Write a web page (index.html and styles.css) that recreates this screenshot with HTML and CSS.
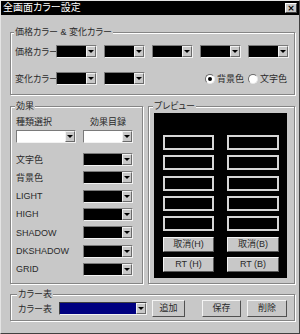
FILE: index.html
```html
<!DOCTYPE html>
<html lang="ja">
<head>
  <meta charset="UTF-8" />
  <title>全画面カラー設定</title>
  <link rel="stylesheet" href="styles.css">
</head>
<body>
  <div class="window">
    <div class="titlebar">
      <span class="title">全画面カラー設定</span>
      <span class="close">×</span>
    </div>

    <div class="content">
      <fieldset class="group g-colors">
        <legend>価格カラー &amp; 変化カラー</legend>
        <div class="row">
          <span class="lbl">価格カラー</span>
          <div class="combos">
            <div class="combo"><span class="swatch"></span><span class="arrow"></span></div>
            <div class="combo"><span class="swatch"></span><span class="arrow"></span></div>
            <div class="combo"><span class="swatch"></span><span class="arrow"></span></div>
            <div class="combo"><span class="swatch"></span><span class="arrow"></span></div>
            <div class="combo"><span class="swatch"></span><span class="arrow"></span></div>
          </div>
        </div>
        <div class="row row-2">
          <span class="lbl">変化カラー</span>
          <div class="combos">
            <div class="combo"><span class="swatch"></span><span class="arrow"></span></div>
            <div class="combo"><span class="swatch"></span><span class="arrow"></span></div>
          </div>
          <div class="radios">
            <span class="radio checked"></span><span class="radio-text">背景色</span>
            <span class="radio"></span><span class="radio-text">文字色</span>
          </div>
        </div>
      </fieldset>

      <div class="middle">
        <fieldset class="group g-effect">
          <legend>効果</legend>
          <div class="effect-head">
            <span>種類選択</span>
            <span class="center">効果目録</span>
            <div class="combo white wide"><span class="swatch"></span><span class="arrow"></span></div>
            <div class="combo white"><span class="swatch"></span><span class="arrow"></span></div>
          </div>
          <div class="effect-list">
            <span>文字色</span>
            <div class="combo"><span class="swatch"></span><span class="arrow"></span></div>
            <span>背景色</span>
            <div class="combo"><span class="swatch"></span><span class="arrow"></span></div>
            <span>LIGHT</span>
            <div class="combo"><span class="swatch"></span><span class="arrow"></span></div>
            <span>HIGH</span>
            <div class="combo"><span class="swatch"></span><span class="arrow"></span></div>
            <span>SHADOW</span>
            <div class="combo"><span class="swatch"></span><span class="arrow"></span></div>
            <span>DKSHADOW</span>
            <div class="combo"><span class="swatch"></span><span class="arrow"></span></div>
            <span>GRID</span>
            <div class="combo"><span class="swatch"></span><span class="arrow"></span></div>
          </div>
        </fieldset>

        <fieldset class="group g-preview">
          <legend>プレビュー</legend>
          <div class="preview">
            <span class="cell"></span><span class="cell"></span>
            <span class="cell"></span><span class="cell"></span>
            <span class="cell"></span><span class="cell"></span>
            <span class="cell"></span><span class="cell"></span>
            <span class="cell"></span><span class="cell"></span>
            <span class="pbtn">取消(H)</span><span class="pbtn">取消(B)</span>
            <span class="pbtn">RT (H)</span><span class="pbtn">RT (B)</span>
          </div>
        </fieldset>
      </div>

      <fieldset class="group g-table">
        <legend>カラー表</legend>
        <div class="row">
          <span class="lbl">カラー表</span>
          <div class="combo navy"><span class="swatch"></span><span class="arrow"></span></div>
          <span class="btn btn-add">追加</span>
          <span class="btn btn-save">保存</span>
          <span class="btn btn-del">削除</span>
        </div>
      </fieldset>
    </div>
  </div>
</body>
</html>
```

FILE: styles.css
```css
body {
  margin: 0;
  background: #c8c8c8;
  font-family: "Liberation Sans", "Noto Sans CJK JP", sans-serif;
  font-size: 9px;
  font-feature-settings: "palt";
  color: #2a2a2a;
  white-space: nowrap;
}

.window {
  width: 300px;
  height: 334px;
  box-sizing: border-box;
  background: #c8c8c8;
  border: 1px solid;
  border-color: #e4e4e4 #404040 #404040 #e4e4e4;
  overflow: hidden;
}

.titlebar {
  height: 14px;
  background: #000;
  color: #fff;
  display: flex;
  align-items: center;
  justify-content: space-between;
  padding-left: 2px;
}

.title {
  font-size: 10px;
  line-height: 14px;
}

.close {
  width: 12px;
  height: 10px;
  margin-right: 2px;
  box-sizing: border-box;
  background: #c8c8c8;
  color: #000;
  border: 1px solid;
  border-color: #fff #404040 #404040 #fff;
  font-family: "DejaVu Sans", sans-serif;
  font-size: 9px;
  font-weight: bold;
  line-height: 8px;
  text-align: center;
}

.content {
  padding: 11px 4px 0 9px;
}

.group {
  margin: 0;
  min-width: 0;
  border: 1px solid #858585;
  box-shadow: inset 1px 1px 0 #fff, 1px 1px 0 #fff;
}

.group legend {
  padding: 0 1px;
  margin-left: -1px;
  line-height: 12px;
  background: #c8c8c8;
}

.row {
  display: flex;
  align-items: center;
  height: 13px;
}

.lbl {
  width: 41px;
  flex-shrink: 0;
  line-height: 12px;
}

/* colour combo boxes */
.combos {
  display: flex;
  gap: 7px;
}

.combo {
  display: flex;
  width: 41px;
  height: 13px;
  box-sizing: border-box;
  border: 1px solid;
  border-color: #7a7a7a #f2f2f2 #f2f2f2 #7a7a7a;
  background: #000;
  flex-shrink: 0;
}

.combo .swatch {
  flex: 1;
}

.combo .arrow {
  width: 10px;
  box-sizing: border-box;
  background: #c8c8c8;
  border: 1px solid;
  border-color: #f2f2f2 #6a6a6a #6a6a6a #f2f2f2;
  display: flex;
  align-items: center;
  justify-content: center;
}

.combo .arrow::after {
  content: "";
  border-top: 3px solid #000;
  border-left: 3px solid transparent;
  border-right: 3px solid transparent;
}

.combo.white {
  background: #fff;
  width: 50px;
}

.combo.white.wide {
  width: 60px;
}

.combo.navy {
  width: 88px;
  background: #000080;
  border-color: #404040 #f2f2f2 #f2f2f2 #404040;
}

/* price / change colours */
.g-colors {
  padding: 7px 4px 9px 4px;
}

.row-2 {
  margin-top: 14px;
}

.radios {
  display: flex;
  align-items: center;
  margin-left: 60px;
}

.radio {
  width: 10px;
  height: 10px;
  box-sizing: border-box;
  border-radius: 50%;
  background: #fff;
  border: 1px solid;
  border-color: #6a6a6a #e8e8e8 #e8e8e8 #6a6a6a;
  display: flex;
  align-items: center;
  justify-content: center;
}

.radio.checked::after {
  content: "";
  width: 4px;
  height: 4px;
  border-radius: 50%;
  background: #000;
}

.radio-text {
  margin: 0 4px 0 2px;
}

/* effect + preview */
.middle {
  display: flex;
  gap: 5px;
  margin-top: 5px;
}

.g-effect {
  width: 133px;
  box-sizing: border-box;
  padding: 4px 4px 5px 5px;
}

.effect-head {
  display: grid;
  grid-template-columns: 67px 50px;
  row-gap: 2px;
  line-height: 12px;
}

.center {
  text-align: center;
}

.effect-list {
  display: grid;
  grid-template-columns: 67px 50px;
  grid-auto-rows: 13px;
  row-gap: 5.33px;
  align-items: center;
  margin-top: 10px;
  line-height: 12px;
}

.effect-list .combo {
  width: 50px;
}

.g-preview {
  flex: 1;
  padding: 1px 7px 5px 5px;
}

.preview {
  background: #000;
  height: 165px;
  box-sizing: border-box;
  padding: 22px 8px 6px 9px;
  display: grid;
  grid-template-columns: 51px 52px;
  grid-auto-rows: 15px;
  column-gap: 13px;
  row-gap: 5.33px;
}

.cell {
  border: 2px solid #d6d6d6;
}

.pbtn {
  background: #c8c8c8;
  border: 1px solid;
  border-color: #f4f4f4 #5a5a5a #5a5a5a #f4f4f4;
  text-align: center;
  line-height: 13px;
}

/* colour table */
.g-table {
  margin-top: 4px;
  padding: 0 4px 3px 7px;
}

.g-table .row {
  height: 17px;
}

.btn {
  height: 17px;
  box-sizing: border-box;
  background: #c8c8c8;
  border: 1px solid;
  border-color: #f4f4f4 #505050 #505050 #f4f4f4;
  text-align: center;
  line-height: 15px;
}

.btn-add {
  width: 33px;
  margin-left: 5px;
}

.btn-save {
  width: 39px;
  margin-left: 17px;
}

.btn-del {
  width: 40px;
  margin-left: 6px;
}
```
